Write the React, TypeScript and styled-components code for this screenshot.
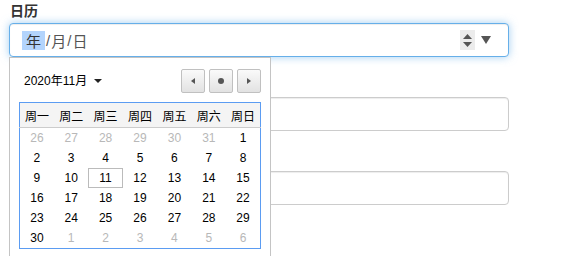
import React from 'react'
import styled, { createGlobalStyle } from 'styled-components'

const GlobalStyle = createGlobalStyle`
  html, body {
    margin: 0;
    padding: 0;
    background: #fff;
    font-family: "Liberation Sans", Arial, "Noto Sans CJK SC", sans-serif;
  }
`

const Page = styled.div`
  position: relative;
  width: 563px;
  height: 256px;
  overflow: hidden;
  padding: 0 9px;
  box-sizing: border-box;
`

const Form = styled.div`
  width: 500px;
  display: flex;
  flex-direction: column;
  gap: 17px;
`

const Group = styled.div`
  display: flex;
  flex-direction: column;
`

const Label = styled.label`
  display: block;
  height: 20px;
  line-height: 20px;
  margin: 0 0 3px 1px;
  font-family: "Noto Sans CJK SC", sans-serif;
  font-weight: 700;
  font-size: 14px;
  color: #333;
`

const Field = styled.div<{ $focused?: boolean }>`
  height: 34px;
  box-sizing: border-box;
  border: 1px solid ${(p) => (p.$focused ? '#66afe9' : '#ccc')};
  border-radius: 4px;
  background: #fff;
  box-shadow: ${(p) =>
    p.$focused
      ? 'inset 0 1px 1px rgba(0,0,0,.075), 0 0 8px rgba(102,175,233,.6)'
      : 'inset 0 1px 1px rgba(0,0,0,.075)'};
  display: flex;
  align-items: center;
  padding: 0 17px 0 12px;
  font-family: "Noto Sans CJK SC", sans-serif;
  font-size: 15px;
  color: #555;
`

const Segment = styled.span<{ $active?: boolean }>`
  padding: 0 ${(p) => (p.$active ? '4px' : '0')};
  background: ${(p) => (p.$active ? '#b3d4fc' : 'transparent')};
  color: ${(p) => (p.$active ? '#333' : '#555')};
  line-height: 19px;
`

const Sep = styled.span`
  color: #555;
  font-family: "Liberation Sans", Arial, sans-serif;
  margin: 0 1px;
`

const Spacer = styled.div`
  flex: 1;
`

const Spinner = styled.div`
  width: 15px;
  height: 20px;
  background: #ececec;
  display: flex;
  flex-direction: column;
  align-items: center;
  justify-content: center;
  gap: 3px;
`

const DropArrow = styled.div`
  width: 0;
  height: 0;
  margin-left: 6px;
  border-left: 5px solid transparent;
  border-right: 5px solid transparent;
  border-top: 8px solid #555;
`

const Popup = styled.div`
  position: absolute;
  top: 57px;
  left: 9px;
  width: 262px;
  height: 220px;
  box-sizing: border-box;
  background: #fff;
  border: 1px solid #c4c4c4;
  padding: 10px 9px 0;
  font-family: "Liberation Sans", Arial, "Noto Sans CJK SC", sans-serif;
`

const Header = styled.div`
  display: flex;
  align-items: center;
  height: 25px;
`

const MonthTitle = styled.div`
  display: flex;
  align-items: center;
  padding-left: 5px;
  font-size: 12px;
  line-height: 16px;
  color: #000;
`

const Caret = styled.span`
  width: 0;
  height: 0;
  margin-left: 7px;
  border-left: 4px solid transparent;
  border-right: 4px solid transparent;
  border-top: 4px solid #222;
`

const NavGroup = styled.div`
  margin-left: auto;
  display: flex;
  gap: 4px;
`

const NavButton = styled.div`
  width: 24px;
  height: 24px;
  box-sizing: border-box;
  border: 1px solid #c0c0c0;
  border-radius: 2px;
  background: linear-gradient(#fafafa, #e2e2e2);
  display: flex;
  align-items: center;
  justify-content: center;
`

const Table = styled.table`
  margin-top: 9px;
  width: 242px;
  border: 1px solid #5b9cf2;
  border-collapse: collapse;
  table-layout: fixed;
`

const HeadCell = styled.th`
  height: 24px;
  background: #f4f4f4;
  border-bottom: 1px solid #ccc;
  font-family: "Noto Sans CJK SC", sans-serif;
  font-weight: 400;
  font-size: 12px;
  color: #000;
  padding: 0;
  text-align: center;
`

const DayCell = styled.td<{ $muted?: boolean; $today?: boolean }>`
  height: 20px;
  padding: 0;
  text-align: center;
  font-size: 12px;
  color: ${(p) => (p.$muted ? '#b8b8b8' : '#000')};
  box-shadow: ${(p) => (p.$today ? 'inset 0 0 0 1px #bbb' : 'none')};
`

const weekdays = ['周一', '周二', '周三', '周四', '周五', '周六', '周日']

const weeks: { d: number; m?: boolean }[][] = [
  [{ d: 26, m: true }, { d: 27, m: true }, { d: 28, m: true }, { d: 29, m: true }, { d: 30, m: true }, { d: 31, m: true }, { d: 1 }],
  [2, 3, 4, 5, 6, 7, 8].map((d) => ({ d })),
  [9, 10, 11, 12, 13, 14, 15].map((d) => ({ d })),
  [16, 17, 18, 19, 20, 21, 22].map((d) => ({ d })),
  [23, 24, 25, 26, 27, 28, 29].map((d) => ({ d })),
  [{ d: 30 }, { d: 1, m: true }, { d: 2, m: true }, { d: 3, m: true }, { d: 4, m: true }, { d: 5, m: true }, { d: 6, m: true }],
]

export default function App() {
  return (
    <Page>
      <GlobalStyle />
      <Form>
        <Group>
          <Label>日历</Label>
          <Field $focused>
            <Segment $active>年</Segment>
            <Sep>/</Sep>
            <Segment>月</Segment>
            <Sep>/</Sep>
            <Segment>日</Segment>
            <Spacer />
            <Spinner>
              <svg width="9" height="5" viewBox="0 0 9 5"><path d="M0 5 L4.5 0 L9 5 Z" fill="#555" /></svg>
              <svg width="9" height="5" viewBox="0 0 9 5"><path d="M0 0 L4.5 5 L9 0 Z" fill="#555" /></svg>
            </Spinner>
            <DropArrow />
          </Field>
        </Group>
        <Group>
          <Label>时间</Label>
          <Field />
        </Group>
        <Group>
          <Label>周</Label>
          <Field />
        </Group>
      </Form>

      <Popup>
        <Header>
          <MonthTitle>
            <span>2020年11月</span>
            <Caret />
          </MonthTitle>
          <NavGroup>
            <NavButton>
              <svg width="4" height="6" viewBox="0 0 4 6"><path d="M4 0 L0 3 L4 6 Z" fill="#555" /></svg>
            </NavButton>
            <NavButton>
              <svg width="6" height="6" viewBox="0 0 6 6"><circle cx="3" cy="3" r="3" fill="#555" /></svg>
            </NavButton>
            <NavButton>
              <svg width="4" height="6" viewBox="0 0 4 6"><path d="M0 0 L4 3 L0 6 Z" fill="#555" /></svg>
            </NavButton>
          </NavGroup>
        </Header>
        <Table>
          <thead>
            <tr>
              {weekdays.map((w) => (
                <HeadCell key={w}>{w}</HeadCell>
              ))}
            </tr>
          </thead>
          <tbody>
            {weeks.map((row, i) => (
              <tr key={i}>
                {row.map((c, j) => (
                  <DayCell key={j} $muted={c.m} $today={!c.m && c.d === 11}>
                    {c.d}
                  </DayCell>
                ))}
              </tr>
            ))}
          </tbody>
        </Table>
      </Popup>
    </Page>
  )
}
